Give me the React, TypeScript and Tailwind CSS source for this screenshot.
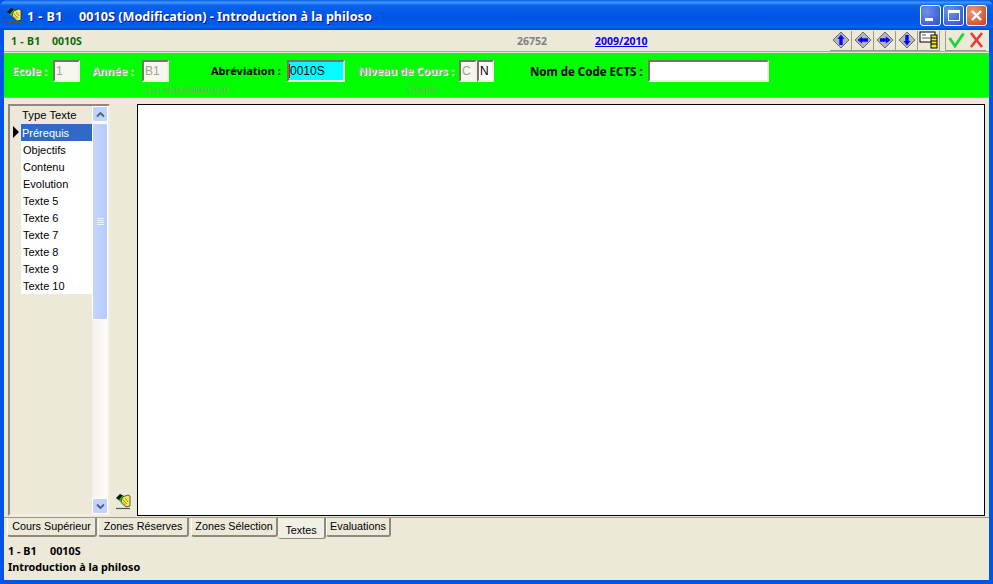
import React from "react"

const rows = ["Objectifs", "Contenu", "Evolution", "Texte 5", "Texte 6", "Texte 7", "Texte 8", "Texte 9", "Texte 10"]

function PencilIcon() {
  return (
    <svg width="17" height="17" viewBox="0 0 17 17">
      <path d="M1 5 L5 1 L9 3 L5 8 Z" fill="#111" />
      <path d="M3.5 7.5 L7.5 2.5 L9 4.5 L5.5 9 Z" fill="#19d419" />
      <path d="M7.5 4 L13 2 L15 3 L15 13 L11 14 L6 9.5 Z" fill="#f4e85c" stroke="#222" strokeWidth="0.7" />
      <path d="M8 7 L12 11 M10 5 L13 9 M7.5 9 L11 12.5" stroke="#8a7a20" strokeWidth="0.8" />
      <path d="M1 15.5 H15" stroke="#555" strokeWidth="1.2" />
    </svg>
  )
}

function ArrowButton({ dir }: { dir: "up" | "left" | "right" | "down" }) {
  const rot = { up: 0, right: 90, down: 180, left: 270 }[dir]
  return (
    <div className="w-[22px] h-[20px] flex items-center justify-center bg-[#ece9d8] border-r border-b border-[#9d9a88]">
      <svg width="18" height="18" viewBox="0 0 18 18">
        <path d="M9 1 L17 9 L9 17 L1 9 Z" fill="#b4b4bc" stroke="#6a6a70" />
        <path d="M9 3.5 L12.5 8 H10.7 V14 H7.3 V8 H5.5 Z" fill="#0808f0" transform={`rotate(${rot} 9 9)`} />
      </svg>
    </div>
  )
}

function Field({ className, value, dim }: { className: string; value?: string; dim?: boolean }) {
  return (
    <div
      className={`h-[22px] border-2 border-t-[#77736a] border-l-[#77736a] border-r-[#f1efe2] border-b-[#f1efe2] pl-px text-[12px] leading-[18px] font-['Liberation_Sans',sans-serif] ${dim ? "bg-[#f7f6ee] text-[#a0a0a0]" : "text-black"} ${className}`}
    >
      {value}
    </div>
  )
}

function Dim({ children, className }: { children: React.ReactNode; className?: string }) {
  return (
    <span className={`pt-px font-bold text-[11px] text-[#b0ad9e] [text-shadow:1px_1px_0_#fff] ${className ?? ""}`}>
      {children}
    </span>
  )
}

function Tab({ label, className, active }: { label: string; className: string; active?: boolean }) {
  return (
    <div
      className={`flex justify-center whitespace-nowrap rounded-b-[3px] border-r-2 border-[#8d8a7c] text-[10.8px] font-['Liberation_Sans',sans-serif] ${
        active
          ? "h-[21px] bg-[#f2f0e6] pt-[4px] border-b"
          : "h-[19px] bg-[#ece9d8] border-b-2 border-l border-l-white leading-[17px]"
      } ${className}`}
    >
      {label}
    </div>
  )
}

export default function App() {
  return (
    <div className="w-[993px] h-[584px] overflow-hidden flex flex-col bg-[#0055e5] font-['Noto_Sans','Liberation_Sans',sans-serif] text-black">
      {/* title bar */}
      <div className="h-[30px] shrink-0 flex items-center pl-[6px] pr-[6px] rounded-t-[7px] bg-[linear-gradient(180deg,#0a5fe0_0%,#3d95ff_8%,#0a62e8_18%,#0055e5_55%,#0058ee_80%,#0a60f0_90%,#0047c8_100%)]">
        <PencilIcon />
        <div className="ml-[4px] pt-[3px] flex text-white font-bold text-[12.65px] whitespace-pre [text-shadow:1px_1px_0_#0f1089]">
          <span className="w-[52px] tracking-[0.4px]">1 - B1</span>
          <span>0010S (Modification) - Introduction à la philoso</span>
        </div>
        <div className="ml-auto flex gap-[2px]">
          <div className="w-[21px] h-[21px] rounded-[3px] border border-white bg-[radial-gradient(circle_at_30%_30%,#6f92e8,#2a50cf)] flex items-end pb-[4px] pl-[4px]">
            <div className="w-[8px] h-[3px] bg-white" />
          </div>
          <div className="w-[21px] h-[21px] rounded-[3px] border border-white bg-[radial-gradient(circle_at_30%_30%,#6f92e8,#2a50cf)] flex items-center justify-center">
            <div className="w-[12px] h-[11px] border border-white border-t-[3px]" />
          </div>
          <div className="w-[21px] h-[21px] rounded-[3px] border border-white bg-[radial-gradient(circle_at_30%_30%,#ee9a7c,#c93d18)] flex items-center justify-center">
            <svg width="13" height="13" viewBox="0 0 13 13">
              <path d="M2 2 L11 11 M11 2 L2 11" stroke="#fff" strokeWidth="2.4" />
            </svg>
          </div>
        </div>
      </div>

      <div className="flex-1 mx-[4px] mb-[4px] flex flex-col bg-[#ece9d8]">
        {/* toolbar */}
        <div className="h-[22px] shrink-0 flex items-center pl-[7px] font-bold text-[10.5px] border-b border-[#aca899]">
          <span className="mt-[3px] w-[41px] tracking-[0.3px] text-[#0b6a0b]">1 - B1</span>
          <span className="mt-[3px] w-[465px] text-[#0b6a0b]">0010S</span>
          <span className="mt-[3px] w-[78px] text-[#808080]">26752</span>
          <span className="mt-[3px] w-[235px] text-[#0000ff] underline">2009/2010</span>
          <div className="flex">
            <ArrowButton dir="up" />
            <ArrowButton dir="left" />
            <ArrowButton dir="right" />
            <ArrowButton dir="down" />
            <div className="w-[22px] h-[20px] flex items-center justify-center border-r border-b border-[#9d9a88]">
              <svg width="20" height="18" viewBox="0 0 20 18">
                <rect x="1" y="1" width="15" height="10" fill="#fff" stroke="#000" />
                <path d="M3 4 H7 M3 7 H11" stroke="#555" />
                <rect x="12" y="4" width="6" height="13" fill="#f6e71c" stroke="#000" />
                <path d="M12 7 H18 M12 10 H18 M12 13 H18" stroke="#000" />
              </svg>
            </div>
            <div className="w-[21px] h-[20px] ml-[5px] flex items-center justify-center border-l border-b border-[#9d9a88]">
              <svg width="17" height="16" viewBox="0 0 17 16">
                <path d="M1.5 6 L7 14 L15.5 1.5" fill="none" stroke="#18d838" strokeWidth="2.8" />
              </svg>
            </div>
            <div className="w-[20px] h-[20px] flex items-center justify-center border-b border-[#9d9a88]">
              <svg width="15" height="16" viewBox="0 0 15 16">
                <path d="M2 1 L13 15 M13 1 L2 15" stroke="#e83a3a" strokeWidth="2.6" />
              </svg>
            </div>
          </div>
        </div>

        {/* green header */}
        <div className="h-[45px] mt-[1px] shrink-0 bg-[#00ff00] border-b border-[#aca899] pl-[8px] pt-[7px]">
          <div className="flex items-center h-[22px]">
            <Dim className="w-[41px]">Ecole :</Dim>
            <Field className="w-[27px]" value="1" dim />
            <Dim className="w-[50px] ml-[12px]">Année :</Dim>
            <Field className="w-[27px]" value="B1" dim />
            <span className="pt-px ml-[42px] w-[76px] font-bold text-[11px]">Abréviation :</span>
            <Field className="relative w-[58px] bg-[#00ffff] before:absolute before:left-0 before:top-[2px] before:h-[14px] before:w-px before:bg-red-600" value="0010S" />
            <Dim className="ml-[13px] w-[101px]">Niveau de Cours :</Dim>
            <Field className="w-[18px]" value="C" dim />
            <Field className="w-[17px] bg-white" value="N" />
            <span className="pt-px ml-[36px] w-[118px] font-bold text-[11.5px] whitespace-nowrap">Nom de Code ECTS :</span>
            <Field className="w-[121px] bg-white" />
          </div>
          <div className="flex text-[11px] leading-[13px] mt-[1px] text-[#6fb35c] font-['Liberation_Sans',sans-serif]">
            <span className="ml-[133px] w-[262px]">1re Baccalauréat</span>
            <span>Cours</span>
          </div>
        </div>

        {/* main */}
        <div className="h-[419px] shrink-0 flex pt-[6px] pl-[4px] pr-[4px]">
          <div className="w-[102px] h-[412px] shrink-0 border-2 border-t-[#8d8a7c] border-l-[#8d8a7c] border-r-[#f1efe2] border-b-[#f1efe2] flex">
            <div className="w-[82px] pl-[11px] text-[11px] font-['Liberation_Sans',sans-serif]">
              <div className="h-[18px] pl-px leading-[18px] text-[11.3px]">Type Texte</div>
              <div className="relative h-[17px] bg-[#316ac5] text-white pl-px leading-[19px]">
                <span className="absolute -left-[8px] top-[2px] w-0 h-0 border-y-[6px] border-y-transparent border-l-[6px] border-l-black" />
                Prérequis
              </div>
              {rows.map((r) => (
                <div key={r} className="h-[17px] bg-white pl-[2px] leading-[19px]">
                  {r}
                </div>
              ))}
            </div>
            <div className="w-[16px] flex flex-col bg-[linear-gradient(90deg,#f3f1ec,#fdfdfa)]">
              <div className="h-[16px] rounded-[2px] border border-white bg-[#c1d3fb] flex items-center justify-center">
                <svg width="9" height="7" viewBox="0 0 9 7">
                  <path d="M1 5.5 L4.5 2 L8 5.5" fill="none" stroke="#4d6185" strokeWidth="1.8" />
                </svg>
              </div>
              <div className="h-[197px] mt-[1px] rounded-[2px] border border-white bg-[linear-gradient(90deg,#c5d6fc,#b5cbfa)] flex flex-col items-center justify-center gap-px">
                <div className="w-[7px] h-px bg-[#eef4fe]" />
                <div className="w-[7px] h-px bg-[#eef4fe]" />
                <div className="w-[7px] h-px bg-[#eef4fe]" />
                <div className="w-[7px] h-px bg-[#eef4fe]" />
              </div>
              <div className="flex-1" />
              <div className="h-[16px] rounded-[2px] border border-white bg-[#c1d3fb] flex items-center justify-center">
                <svg width="9" height="7" viewBox="0 0 9 7">
                  <path d="M1 1.5 L4.5 5 L8 1.5" fill="none" stroke="#4d6185" strokeWidth="1.8" />
                </svg>
              </div>
            </div>
          </div>
          <div className="w-[27px] h-[412px] shrink-0 flex items-end justify-center pb-[6px]">
            <PencilIcon />
          </div>
          <div className="w-[848px] h-[412px] bg-white border border-black shrink-0" />
        </div>

        {/* tabs */}
        <div className="h-[21px] shrink-0 flex items-start border-t border-[#9d9a88] pl-[3px]">
          <Tab label="Cours Supérieur" className="w-[90px]" />
          <Tab label="Zones Réserves" className="w-[91px] ml-[1px]" />
          <Tab label="Zones Sélection" className="w-[87px] ml-[2px]" />
          <Tab label="Textes" className="w-[48px]" active />
          <Tab label="Evaluations" className="w-[65px]" />
        </div>

        <div className="flex-1 pl-[4px] pt-[5px] font-bold text-[10.8px] leading-[16px]">
          <div className="flex">
            <span className="w-[42px]">1 - B1</span>
            <span>0010S</span>
          </div>
          <div>Introduction à la philoso</div>
        </div>
      </div>
    </div>
  )
}
